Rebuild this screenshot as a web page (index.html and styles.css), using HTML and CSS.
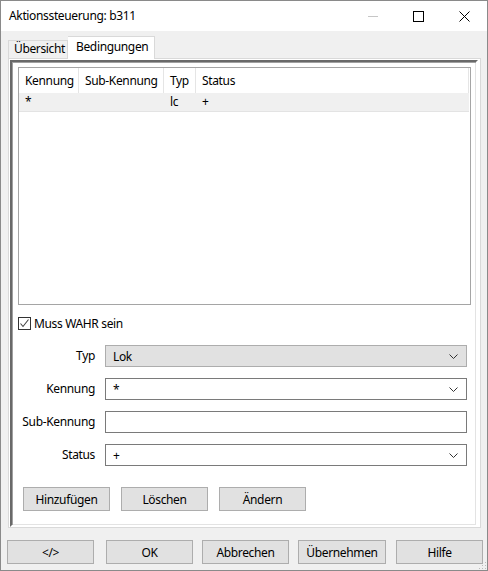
FILE: index.html
```html
<!DOCTYPE html>
<html lang="de">
<head>
<meta charset="utf-8">
<title>Aktionssteuerung: b311</title>
<link rel="stylesheet" href="styles.css">
</head>
<body>
<div class="window">
  <div class="titlebar">
    <span class="title">Aktionssteuerung: b311</span>
    <div class="controls">
      <span class="ctl ctl-min"><svg width="10" height="10" viewBox="0 0 10 10"><path d="M0 5.5H10" stroke="#c6c6c6" stroke-width="1"/></svg></span>
      <span class="ctl ctl-max"><svg width="11" height="11" viewBox="0 0 11 11"><rect x="0.5" y="0.5" width="10" height="10" fill="none" stroke="#000" stroke-width="1"/></svg></span>
      <span class="ctl ctl-close"><svg width="11" height="11" viewBox="0 0 11 11"><path d="M0.5 0.5L10.5 10.5M10.5 0.5L0.5 10.5" stroke="#000" stroke-width="1"/></svg></span>
    </div>
  </div>
  <div class="body">
    <div class="tabs">
      <div class="tab">Übersicht</div>
      <div class="tab active">Bedingungen</div>
    </div>
    <div class="panel">
      <div class="frame">
        <div class="list">
          <div class="lrow lhead">
            <div class="c c1">Kennung</div>
            <div class="c c2">Sub-Kennung</div>
            <div class="c c3">Typ</div>
            <div class="c c4">Status</div>
          </div>
          <div class="lrow litem">
            <div class="c c1">*</div>
            <div class="c c2"></div>
            <div class="c c3">lc</div>
            <div class="c c4">+</div>
          </div>
        </div>
        <label class="check">
          <span class="box"><svg width="11" height="11" viewBox="0 0 11 11"><path d="M1.5 5.5L4 8.5L9.5 1.5" fill="none" stroke="#444" stroke-width="1.1"/></svg></span>
          <span>Muss WAHR sein</span>
        </label>
        <div class="form">
          <div class="lbl">Typ</div>
          <div class="field combo disabled"><span>Lok</span><svg class="chev" width="9" height="5" viewBox="0 0 9 5"><path d="M0.5 0.5L4.5 4.5L8.5 0.5" fill="none" stroke="#333" stroke-width="1"/></svg></div>
          <div class="lbl">Kennung</div>
          <div class="field combo"><span>*</span><svg class="chev" width="9" height="5" viewBox="0 0 9 5"><path d="M0.5 0.5L4.5 4.5L8.5 0.5" fill="none" stroke="#333" stroke-width="1"/></svg></div>
          <div class="lbl">Sub-Kennung</div>
          <div class="field"></div>
          <div class="lbl">Status</div>
          <div class="field combo"><span>+</span><svg class="chev" width="9" height="5" viewBox="0 0 9 5"><path d="M0.5 0.5L4.5 4.5L8.5 0.5" fill="none" stroke="#333" stroke-width="1"/></svg></div>
        </div>
        <div class="actions">
          <div class="btn">Hinzufügen</div>
          <div class="btn">Löschen</div>
          <div class="btn">Ändern</div>
        </div>
      </div>
    </div>
    <div class="footer">
      <div class="btn fb1">&lt;/&gt;</div>
      <div class="btn fb2">OK</div>
      <div class="btn fb3">Abbrechen</div>
      <div class="btn fb4">Übernehmen</div>
      <div class="btn fb5">Hilfe</div>
    </div>
    <div class="grip"></div>
  </div>
</div>
</body>
</html>
```

FILE: styles.css
```css
* { box-sizing: border-box; }
html, body { margin: 0; padding: 0; }
body {
  font-family: "Noto Sans", "Open Sans", sans-serif;
  font-size: 12px;
  letter-spacing: -0.35px;
  color: #000;
  background: #f0f0f0;
}
.window {
  width: 488px;
  height: 571px;
  border: 1px solid #8a8a8a;
  background: #f0f0f0;
  display: flex;
  flex-direction: column;
}
.titlebar {
  height: 30px;
  background: #fff;
  display: flex;
  align-items: center;
  padding-left: 8px;
  flex: none;
}
.title { flex: 1; line-height: 30px; }
.controls { display: flex; align-items: center; height: 30px; }
.ctl { display: flex; align-items: center; justify-content: center; height: 30px; }
.ctl svg { display: block; }
.ctl-min { width: 10px; margin-right: 35px; }
.ctl-max { width: 11px; margin-right: 35px; }
.ctl-close { width: 11px; margin-right: 17px; }

.body {
  flex: 1;
  padding: 5px 0 0 7px;
  position: relative;
}
.tabs {
  display: flex;
  align-items: flex-end;
  height: 22px;
  position: relative;
  z-index: 1;
}
.tab {
  height: 18px;
  line-height: 16px;
  padding: 0 0 0 5px;
  border: 1px solid #d9d9d9;
  border-bottom: none;
  background: #f0f0f0;
  width: 60px;
  white-space: nowrap;
}
.tab.active {
  height: 23px;
  margin-bottom: -1px;
  width: 87px;
  background: #fff;
  border-left: none;
  line-height: 20px;
  padding-left: 8px;
}
.panel {
  width: 473px;
  height: 470px;
  border: 1px solid #d9d9d9;
  background: #fff;
  padding: 1px 2px 0 1px;
}
.frame {
  height: 467px;
  border-style: solid;
  border-width: 2px;
  border-color: #696969 #fff #fff #696969;
  box-shadow: inset 1px 1px 0 #a0a0a0, inset -1px -1px 0 #e3e3e3;
  padding: 5px 0 0 6px;
}
.list {
  width: 453px;
  height: 238px;
  border: 1px solid #a5a5a5;
  background: #fff;
  padding-right: 1px;
}
.lrow { display: flex; }
.lhead { height: 25px; }
.lhead .c { border-right: 1px solid #e5e5e5; line-height: 25px; }
.litem { height: 19px; background: #f0f0f0; border-bottom: 1px solid #e3e3e3; }
.litem .c { line-height: 17px; }
.c { padding-left: 6px; white-space: nowrap; }
.c1 { width: 60px; }
.c2 { width: 85px; }
.c3 { width: 32px; }
.c4 { flex: 1; }

.check {
  display: flex;
  align-items: center;
  margin-top: 12px;
  height: 13px;
}
.box {
  width: 13px;
  height: 13px;
  border: 1px solid #333;
  display: flex;
  align-items: center;
  justify-content: center;
  margin-right: 3px;
  background: #fff;
}
.box svg { display: block; }

.form {
  margin-top: 15px;
  display: grid;
  grid-template-columns: 77px 362px;
  column-gap: 10px;
  row-gap: 11px;
}
.lbl {
  text-align: right;
  line-height: 22px;
  height: 22px;
  white-space: nowrap;
}
.field {
  height: 22px;
  border: 1px solid #7a7a7a;
  background: #fff;
  display: flex;
  align-items: center;
  padding: 0 8px 0 7px;
}
.field span { flex: 1; }
.field.disabled { background: #e1e1e1; border-color: #adadad; }
.chev { display: block; }

.actions {
  display: flex;
  gap: 11px;
  margin-top: 21px;
  padding-left: 5px;
}
.btn {
  width: 87px;
  height: 24px;
  border: 1px solid #adadad;
  background: #e1e1e1;
  display: flex;
  align-items: center;
  justify-content: center;
}
.footer {
  display: flex;
  margin-top: 12px;
  margin-left: -1px;
}
.fb2 { margin-left: 12px; }
.fb3 { margin-left: 9px; }
.fb4 { margin-left: 9px; width: 88px; }
.fb5 { margin-left: 10px; }
.grip {
  position: absolute;
  right: 1px;
  bottom: 1px;
  width: 8px;
  height: 8px;
  background-image: radial-gradient(circle, #bcbcbc 0.8px, transparent 1px);
  background-size: 3px 3px;
  clip-path: polygon(100% 0, 100% 100%, 0 100%);
}
```
